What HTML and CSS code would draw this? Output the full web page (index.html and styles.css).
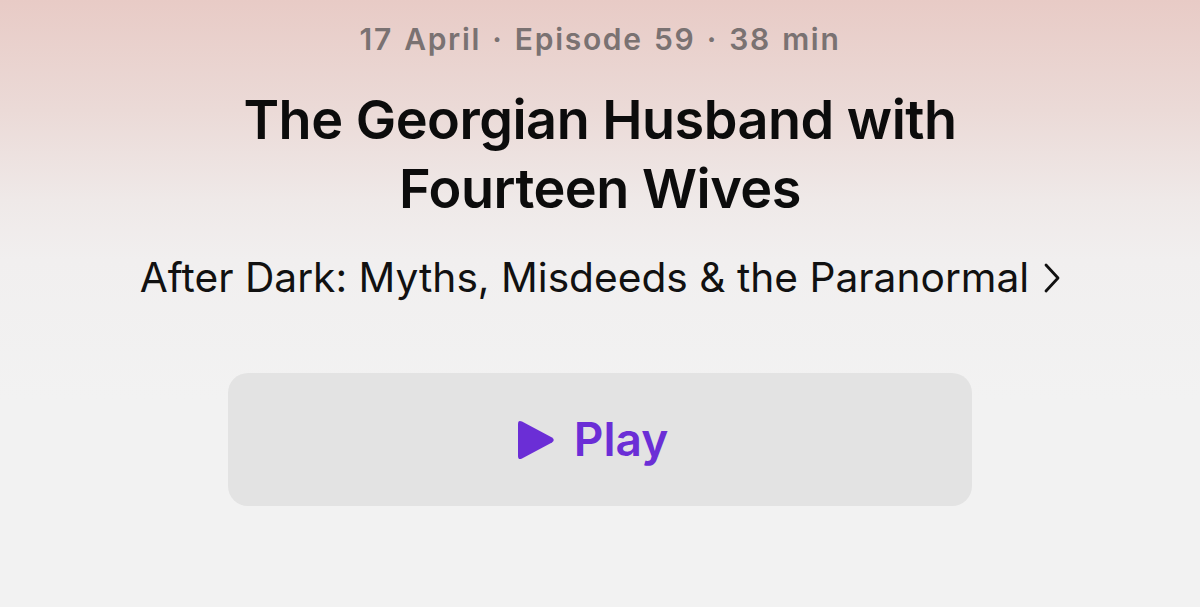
FILE: index.html
```html
<!DOCTYPE html>
<html>
<head>
<meta charset="utf-8">
<link rel="stylesheet" href="styles.css">
</head>
<body>
<main class="episode">
  <p class="meta">17 April · Episode 59 · 38 min</p>
  <h1 class="title">The Georgian Husband with<br>Fourteen Wives</h1>
  <a class="show">After Dark: Myths, Misdeeds &amp; the Paranormal
    <svg class="chev" width="16" height="30" viewBox="0 0 16 30"><path d="M2 2 L14 15 L2 28" fill="none" stroke="#111" stroke-width="2.8" stroke-linecap="round" stroke-linejoin="round"/></svg>
  </a>
  <button class="play">
    <svg class="tri" width="38" height="42" viewBox="0 0 38 42"><path d="M5 2.5 Q1 0.5 1 5 L1 37 Q1 41.5 5 39.5 L35 23.5 Q38.5 21 35 18.5 Z" fill="#6b2ed6"/></svg>
    <span>Play</span>
  </button>
</main>
</body>
</html>
```
FILE: styles.css
```css
html, body { margin: 0; padding: 0; }
body {
  width: 1200px;
  height: 607px;
  overflow: hidden;
  background: linear-gradient(180deg, #e8cbc6 0px, #ebdad7 110px, #efe9e8 200px, #f1efef 260px, #f2f2f2 400px);
  font-family: Inter, "Noto Sans", sans-serif;
}
.episode {
  display: flex;
  flex-direction: column;
  align-items: center;
  padding-top: 19px;
}
.meta {
  margin: 0;
  font-size: 30px;
  font-weight: 600;
  color: #7a7272;
  line-height: 40px;
  letter-spacing: 1.7px;
  word-spacing: 2px;
}
.title {
  margin: 26px 0 0;
  font-size: 54px;
  font-weight: 600;
  line-height: 69px;
  text-align: center;
  color: #0c0c0c;
  letter-spacing: -0.5px;
}
.show {
  margin-top: 31px;
  display: flex;
  align-items: center;
  gap: 15px;
  font-size: 40.7px;
  font-weight: 400;
  color: #111;
  line-height: 48px;
}
.play {
  margin-top: 71px;
  width: 744px;
  height: 133px;
  border: none;
  border-radius: 20px;
  background: #e3e3e3;
  display: flex;
  align-items: center;
  justify-content: center;
  gap: 19px;
  font-family: inherit;
  font-size: 46px;
  font-weight: 600;
  color: #6b2ed6;
  padding: 0 15px 0 0;
}
.play span { line-height: 1; margin-top: -2px; }
```
